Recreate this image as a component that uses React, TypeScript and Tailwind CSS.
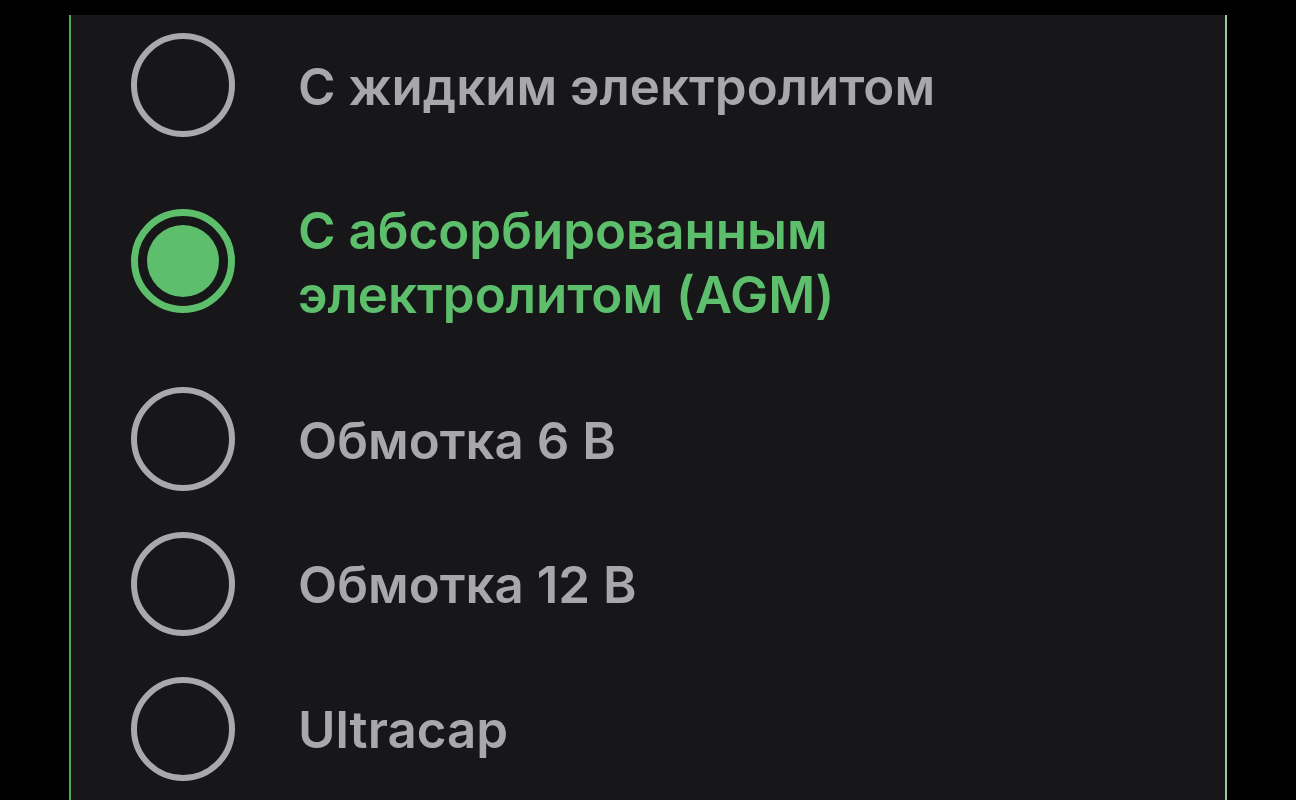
import React from "react";

type Item = { label: React.ReactNode; selected?: boolean; h: string };

const items: Item[] = [
  { label: "С жидким электролитом", h: "h-[140px]" },
  {
    label: (
      <>
        С абсорбированным
        <br />
        электролитом (AGM)
      </>
    ),
    selected: true,
    h: "h-[212px]",
  },
  { label: "Обмотка 6 В", h: "h-[144px]" },
  { label: "Обмотка 12 В", h: "h-[145px]" },
  { label: "Ultracap", h: "h-[145px]" },
];

function Radio({ selected }: { selected?: boolean }) {
  if (selected) {
    return (
      <div className="w-[104px] h-[104px] shrink-0 rounded-full border-[7px] border-[#5dbf6b] flex items-center justify-center">
        <div className="w-[72px] h-[72px] rounded-full bg-[#5dbf6b]" />
      </div>
    );
  }
  return <div className="w-[104px] h-[104px] shrink-0 rounded-full border-[6px] border-[#a9a9ab]" />;
}

export default function App() {
  return (
    <div
      className="w-full h-[800px] bg-black overflow-hidden pt-[15px]"
      style={{ fontFamily: "Inter, 'Noto Sans', sans-serif" }}
    >
      <div className="ml-[69px] w-[1158px] h-[785px] bg-[#171619] border-l-2 border-r-2 border-l-[#4fa85a] border-r-[#9cc79c]">
        {items.map((it, i) => (
          <div key={i} className={`flex items-center pl-[60px] ${it.h}`}>
            <Radio selected={it.selected} />
            <div
              className={`ml-[63px] pt-[3px] text-[51px] leading-[64px] font-semibold ${
                it.selected ? "text-[#5dbf6b]" : "text-[#a8a8aa]"
              }`}
            >
              {it.label}
            </div>
          </div>
        ))}
      </div>
    </div>
  );
}
